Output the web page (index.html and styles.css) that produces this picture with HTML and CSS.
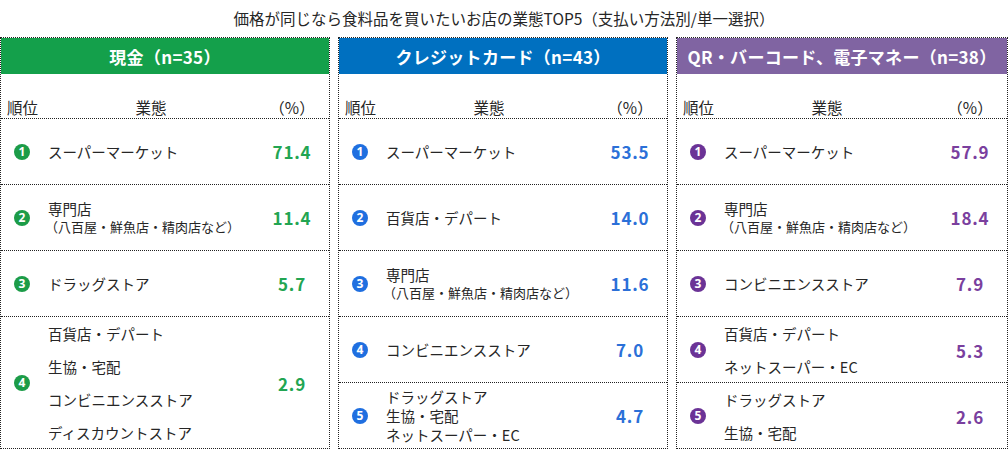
FILE: index.html
```html
<!DOCTYPE html>
<html lang="ja">
<head>
<meta charset="utf-8">
<link rel="stylesheet" href="styles.css">
</head>
<body>
<div class="title">価格が同じなら食料品を買いたいお店の業態TOP5（支払い方法別/単一選択）</div>
<div class="panels">
  <section class="panel green">
    <div class="phead">現金（n=35）</div>
    <div class="cols"><span class="c-rank">順位</span><span class="c-name">業態</span><span></span><span class="c-val">（%）</span></div>
    <div class="row"><span class="rank">1</span><div class="name">スーパーマーケット</div><span class="val">71.4</span></div>
    <div class="row"><span class="rank">2</span><div class="name">専門店<span class="sub">（八百屋・鮮魚店・精肉店など）</span></div><span class="val">11.4</span></div>
    <div class="row"><span class="rank">3</span><div class="name">ドラッグストア</div><span class="val">5.7</span></div>
    <div class="row tall"><span class="rank">4</span><div class="name wide"><span>百貨店・デパート</span><span>生協・宅配</span><span>コンビニエンスストア</span><span>ディスカウントストア</span></div><span class="val">2.9</span></div>
  </section>
  <section class="panel blue">
    <div class="phead">クレジットカード（n=43）</div>
    <div class="cols"><span class="c-rank">順位</span><span class="c-name">業態</span><span></span><span class="c-val">（%）</span></div>
    <div class="row"><span class="rank">1</span><div class="name">スーパーマーケット</div><span class="val">53.5</span></div>
    <div class="row"><span class="rank">2</span><div class="name">百貨店・デパート</div><span class="val">14.0</span></div>
    <div class="row"><span class="rank">3</span><div class="name">専門店<span class="sub">（八百屋・鮮魚店・精肉店など）</span></div><span class="val">11.6</span></div>
    <div class="row"><span class="rank">4</span><div class="name">コンビニエンスストア</div><span class="val">7.0</span></div>
    <div class="row"><span class="rank">5</span><div class="name tight"><span>ドラッグストア</span><span>生協・宅配</span><span>ネットスーパー・EC</span></div><span class="val">4.7</span></div>
  </section>
  <section class="panel purple">
    <div class="phead">QR・バーコード、電子マネー（n=38）</div>
    <div class="cols"><span class="c-rank">順位</span><span class="c-name">業態</span><span></span><span class="c-val">（%）</span></div>
    <div class="row"><span class="rank">1</span><div class="name">スーパーマーケット</div><span class="val">57.9</span></div>
    <div class="row"><span class="rank">2</span><div class="name">専門店<span class="sub">（八百屋・鮮魚店・精肉店など）</span></div><span class="val">18.4</span></div>
    <div class="row"><span class="rank">3</span><div class="name">コンビニエンスストア</div><span class="val">7.9</span></div>
    <div class="row"><span class="rank">4</span><div class="name wide"><span>百貨店・デパート</span><span>ネットスーパー・EC</span></div><span class="val">5.3</span></div>
    <div class="row"><span class="rank">5</span><div class="name wide"><span>ドラッグストア</span><span>生協・宅配</span></div><span class="val">2.6</span></div>
  </section>
</div>
</body>
</html>
```
FILE: styles.css
```css
* { box-sizing: border-box; }
body {
  margin: 0;
  font-family: "Noto Sans CJK JP", "Noto Sans", sans-serif;
  color: #262626;
  background: #fff;
}
.title {
  height: 37px;
  line-height: 36px;
  text-align: center;
  font-size: 15.5px;
}
.panels {
  display: grid;
  grid-template-columns: 330px 330px 332px;
  gap: 8px;
}
.panel {
  border: 1px dotted #222;
  display: flex;
  flex-direction: column;
}
.green { --hd: #14a04b; --num: #22a552; --rk: #1c9c48; }
.blue { --hd: #0070c0; --num: #2b70d8; --rk: #1f6fe0; }
.purple { --hd: #8064a2; --num: #7a3f9e; --rk: #6b3396; }
.phead {
  height: 36px;
  background: var(--hd);
  color: #fff;
  font-weight: bold;
  font-size: 17px;
  display: flex;
  align-items: center;
  justify-content: center;
  letter-spacing: 0.3px;
}
.cols {
  height: 45px;
  border-bottom: 1px dotted #222;
  display: grid;
  grid-template-columns: 100px 100px 1fr 60px;
  padding-right: 7px;
  align-items: end;
  padding-bottom: 2px;
  font-size: 15.5px;
  line-height: 18px;
}
.c-rank { padding-left: 6px; }
.c-name { text-align: center; }
.c-val { text-align: center; }
.row {
  height: 66px;
  border-bottom: 1px dotted #222;
  display: grid;
  grid-template-columns: 47px 1fr 60px;
  padding-right: 7px;
  align-items: center;
}
.row:last-child { border-bottom: none; height: 65px; }
.row.tall { height: 131px; }
.rank {
  width: 16px;
  height: 16px;
  margin-left: 13px;
  border-radius: 50%;
  background: var(--rk);
  color: #fff;
  font-family: "Noto Sans", sans-serif;
  font-weight: bold;
  font-size: 12px;
  line-height: 16px;
  text-align: center;
}
.name {
  font-size: 14.5px;
  line-height: 18px;
  display: flex;
  flex-direction: column;
}
.name.wide { line-height: 33px; }
.name.tight { line-height: 19px; }
.sub {
  font-size: 13px;
  margin-left: -3px;
}
.val {
  text-align: center;
  color: var(--num);
  font-weight: bold;
  font-size: 17px;
  letter-spacing: 0.8px;
}
```
